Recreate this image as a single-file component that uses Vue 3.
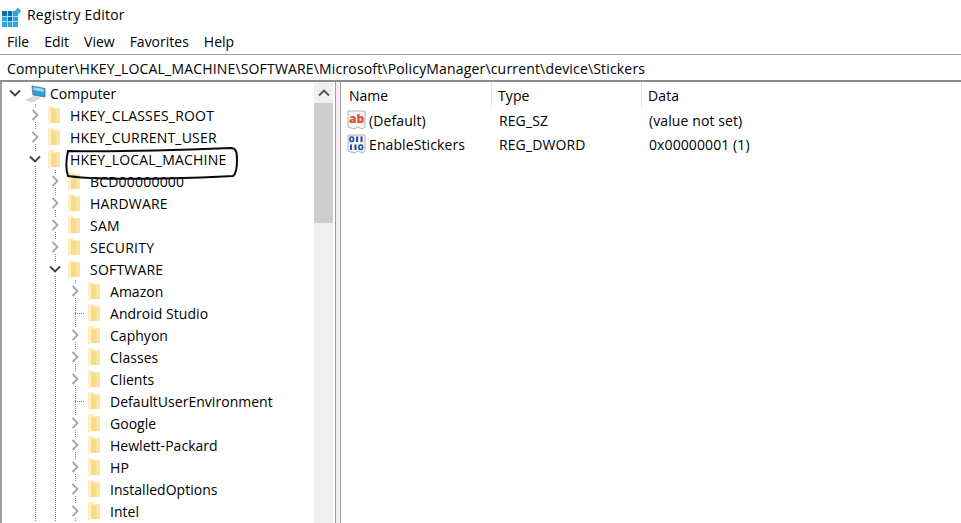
<template>
  <div class="regedit">
    <header class="titlebar">
      <svg class="app-icon" width="22" height="24" viewBox="0 0 22 24">
        <rect x="2" y="8" width="16" height="16" fill="#2aa5e0" />
        <rect x="2" y="8" width="11" height="5.500" fill="#0f6fa8" />
        <rect x="7.500" y="13.500" width="5" height="5" fill="#0f6fa8" />
        <path d="M7.500 8v16M12.500 8v16M2 13.500h16M2 18.500h16" stroke="#a9def5" stroke-width="1" />
        <path d="M18 4.500l3.200 3.500-3.200 3.500-3.200-3.500z" fill="#3fa9dc" />
      </svg>
      <span class="titlebar__text">Registry Editor</span>
    </header>

    <nav class="menu">
      <span v-for="item in menuItems" :key="item" class="menu__item">{{ item }}</span>
    </nav>

    <div class="address">Computer\HKEY_LOCAL_MACHINE\SOFTWARE\Microsoft\PolicyManager\current\device\Stickers</div>

    <main class="panes">
      <section class="tree-pane">
        <ul class="tree">
          <li v-for="row in treeRows" :key="row.name" class="tree__row">
            <span
              v-for="n in row.depth"
              :key="n"
              class="tree__guide"
              :class="{ 'tree__guide--line': n > 1 }"
            />
            <span class="tree__toggle" :class="{ 'tree__toggle--line': row.depth > 0, 'tree__toggle--leaf': row.state === 'leaf' }">
              <svg v-if="row.state === 'open'" class="chevron" width="12" height="14" viewBox="0 0 12 14">
                <path d="M1 4.500L6 9.500l5-5" fill="none" stroke="#404040" stroke-width="1.800" />
              </svg>
              <svg v-else-if="row.state === 'closed'" class="chevron" width="12" height="14" viewBox="0 0 12 14">
                <path d="M3.500 2L8.500 7l-5 5" fill="none" stroke="#a6a6a6" stroke-width="1.800" />
              </svg>
            </span>
            <svg v-if="row.depth === 0" class="computer-icon" width="21" height="19" viewBox="0 0 21 19">
              <path d="M7 2l13 2.500V13l-12-2z" fill="#2f9fe0" stroke="#5a6b78" stroke-width="0.800" />
              <path d="M8 3l11 2-0.500 3-10-2z" fill="#9bd6f5" />
              <path d="M1 16l8-3.500 6 1.500-7 4z" fill="#dcdcdc" stroke="#bcbcbc" stroke-width="0.500" />
            </svg>
            <svg v-else class="folder-icon" width="12" height="18" viewBox="0 0 12 18">
              <path d="M0 0.500h5.500v2H12v14.500H3L0 18z" fill="#fce9ad" />
              <path d="M0 0.500h3v16.500L0 18z" fill="#feeec0" />
              <path d="M3 2.500h5.500v14.500H3z" fill="#f8dc8a" />
              <path d="M8.500 2.500H12v14.500H8.500z" fill="#fbe49e" />
            </svg>
            <span class="tree__label" :class="{ 'tree__label--root': row.depth === 0, 'tree__label--caps': row.name === row.name.toUpperCase() }">{{ row.name }}</span>
          </li>
        </ul>
        <div class="scrollbar">
          <div class="scrollbar__btn">
            <svg width="12" height="8" viewBox="0 0 12 8">
              <path d="M1 6.500L6 1.500l5 5" fill="none" stroke="#505050" stroke-width="1.800" />
            </svg>
          </div>
          <div class="scrollbar__thumb" />
        </div>
      </section>

      <div class="splitter" />

      <section class="list-pane">
        <div class="list__head">
          <span class="col col--name">Name</span>
          <span class="col col--type">Type</span>
          <span class="col col--data">Data</span>
        </div>
        <div v-for="value in values" :key="value.name" class="list__row">
          <span class="col col--name col--value">
            <svg class="value-icon" width="20" height="20" viewBox="0 0 20 20">
              <path d="M1 1h17v16l-3 2-4-2-4 2-6-2z" fill="#f4f4f4" stroke="#b5b5b5" />
              <text v-if="value.kind === 'text'" x="2" y="13" class="value-icon__ab">ab</text>
              <template v-else>
                <rect x="3" y="3" width="3.500" height="4.500" rx="1.500" fill="none" stroke="#2450a8" stroke-width="1.700" />
                <path d="M10 2.500v5.500M14.500 2.500v5.500M4 10.500v5.500M8.500 10.500v5.500" stroke="#2450a8" stroke-width="2.100" />
                <rect x="12" y="11" width="3.500" height="4.500" rx="1.500" fill="none" stroke="#2450a8" stroke-width="1.700" />
              </template>
            </svg>
            <span class="value-name">{{ value.name }}</span>
          </span>
          <span class="col col--type">{{ value.type }}</span>
          <span class="col col--data">{{ value.data }}</span>
        </div>
      </section>
    </main>

    <svg class="scribble" width="961" height="523" viewBox="0 0 961 523">
      <path
        d="M68 151C110 152 180 150 231 148C236 148 237 152 237 160C237 168 236 174 233 176C200 178 130 180 90 178C80 177 72 177 68 176C66 170 66 160 68 151Z"
        fill="none"
        stroke="#0a0a0a"
        stroke-width="2"
      />
    </svg>
  </div>
</template>

<script setup>
const menuItems = ['File', 'Edit', 'View', 'Favorites', 'Help']

const treeRows = [
  { name: 'Computer', depth: 0, state: 'open' },
  { name: 'HKEY_CLASSES_ROOT', depth: 1, state: 'closed' },
  { name: 'HKEY_CURRENT_USER', depth: 1, state: 'closed' },
  { name: 'HKEY_LOCAL_MACHINE', depth: 1, state: 'open' },
  { name: 'BCD00000000', depth: 2, state: 'closed' },
  { name: 'HARDWARE', depth: 2, state: 'closed' },
  { name: 'SAM', depth: 2, state: 'closed' },
  { name: 'SECURITY', depth: 2, state: 'closed' },
  { name: 'SOFTWARE', depth: 2, state: 'open' },
  { name: 'Amazon', depth: 3, state: 'closed' },
  { name: 'Android Studio', depth: 3, state: 'leaf' },
  { name: 'Caphyon', depth: 3, state: 'closed' },
  { name: 'Classes', depth: 3, state: 'closed' },
  { name: 'Clients', depth: 3, state: 'closed' },
  { name: 'DefaultUserEnvironment', depth: 3, state: 'leaf' },
  { name: 'Google', depth: 3, state: 'closed' },
  { name: 'Hewlett-Packard', depth: 3, state: 'closed' },
  { name: 'HP', depth: 3, state: 'closed' },
  { name: 'InstalledOptions', depth: 3, state: 'closed' },
  { name: 'Intel', depth: 3, state: 'closed' },
]

const values = [
  { name: '(Default)', type: 'REG_SZ', data: '(value not set)', kind: 'text' },
  { name: 'EnableStickers', type: 'REG_DWORD', data: '0x00000001 (1)', kind: 'binary' },
]
</script>

<style>
html,
body {
  margin: 0;
  background: #fff;
  overflow: hidden;
}
</style>

<style scoped>
.regedit {
  position: relative;
  display: flex;
  flex-direction: column;
  height: 523px;
  overflow: hidden;
  font-family: "Open Sans", "Noto Sans", sans-serif;
  font-size: 14px;
  color: #000;
  background: #fff;
}

.titlebar {
  display: flex;
  align-items: center;
  box-sizing: border-box;
  height: 30px;
  padding-bottom: 2px;
  flex: none;
}

.titlebar__text {
  letter-spacing: 0.2px;
}

.app-icon {
  margin-top: 2px;
  margin-right: 5px;
}

.menu {
  display: flex;
  box-sizing: border-box;
  height: 24px;
  flex: none;
  align-items: center;
  padding: 0 0 2px 7px;
  gap: 15px;
}

.address {
  flex: none;
  height: 25px;
  line-height: 27px;
  padding-left: 7px;
  border-top: 1px solid #a0a0a0;
  border-bottom: 2px solid #8c8c8c;
  white-space: nowrap;
  letter-spacing: 0.17px;
}

.panes {
  display: flex;
  flex: 1;
  min-height: 0;
}

.tree-pane {
  display: flex;
  width: 333px;
  flex: none;
  border-left: 2px solid #a0a0a0;
  box-sizing: border-box;
}

.tree {
  list-style: none;
  margin: 0;
  padding: 0 0 0 3px;
  flex: 1;
  min-width: 0;
}

.tree__row {
  display: flex;
  align-items: center;
  height: 22px;
  white-space: nowrap;
}

.tree__guide,
.tree__toggle {
  flex: none;
  display: flex;
  align-items: center;
  justify-content: center;
  width: 20px;
  height: 22px;
}

.tree__guide--line,
.tree__toggle--line {
  background: repeating-linear-gradient(#808080 0 1px, transparent 1px 2px) 10px 0 / 1px 100% no-repeat;
}

.tree__toggle--leaf {
  background:
    repeating-linear-gradient(90deg, #808080 0 1px, transparent 1px 2px) 10px 11px / 9px 1px no-repeat,
    repeating-linear-gradient(#808080 0 1px, transparent 1px 2px) 10px 0 / 1px 100% no-repeat;
}

.chevron {
  background: #fff;
}

.folder-icon {
  margin-left: 3px;
}

.tree__label {
  margin-left: 10px;
  letter-spacing: 0.03px;
}

.tree__label--caps {
  letter-spacing: 0.2px;
}

.tree__label--root {
  margin-left: 4px;
}

.scrollbar {
  width: 19px;
  flex: none;
  background: #f0f0f0;
  display: flex;
  flex-direction: column;
}

.scrollbar__btn {
  height: 21px;
  display: flex;
  align-items: center;
  justify-content: center;
}

.scrollbar__thumb {
  height: 120px;
  background: #cdcdcd;
}

.splitter {
  flex: none;
  width: 4px;
  margin-left: 2px;
  background: #f0f0f0;
  border-left: 1px solid #a0a0a0;
  border-right: 1px solid #a0a0a0;
}

.list-pane {
  flex: 1;
  min-width: 0;
}

.list__head {
  display: flex;
  height: 26px;
  align-items: flex-start;
}

.list__row {
  display: flex;
  height: 24px;
  align-items: center;
}

.col {
  box-sizing: border-box;
  white-space: nowrap;
}

.col--name {
  width: 150px;
  padding-left: 8px;
}

.col--type {
  width: 150px;
  padding-left: 8px;
  letter-spacing: 0.1px;
}

.col--data {
  padding-left: 8px;
  letter-spacing: 0.1px;
}

.list__head .col {
  line-height: 27px;
}

.list__head .col--type,
.list__head .col--data {
  border-left: 1px solid #e5e5e5;
  padding-left: 6px;
}

.col--value {
  display: flex;
  align-items: center;
  gap: 2px;
  padding-left: 6px;
}

.value-name {
  letter-spacing: 0.1px;
}

.value-icon {
  flex: none;
}

.value-icon__ab {
  font-size: 12px;
  font-weight: 800;
  fill: #e0503a;
}

.scribble {
  position: absolute;
  top: 0;
  left: 0;
  pointer-events: none;
}
</style>
